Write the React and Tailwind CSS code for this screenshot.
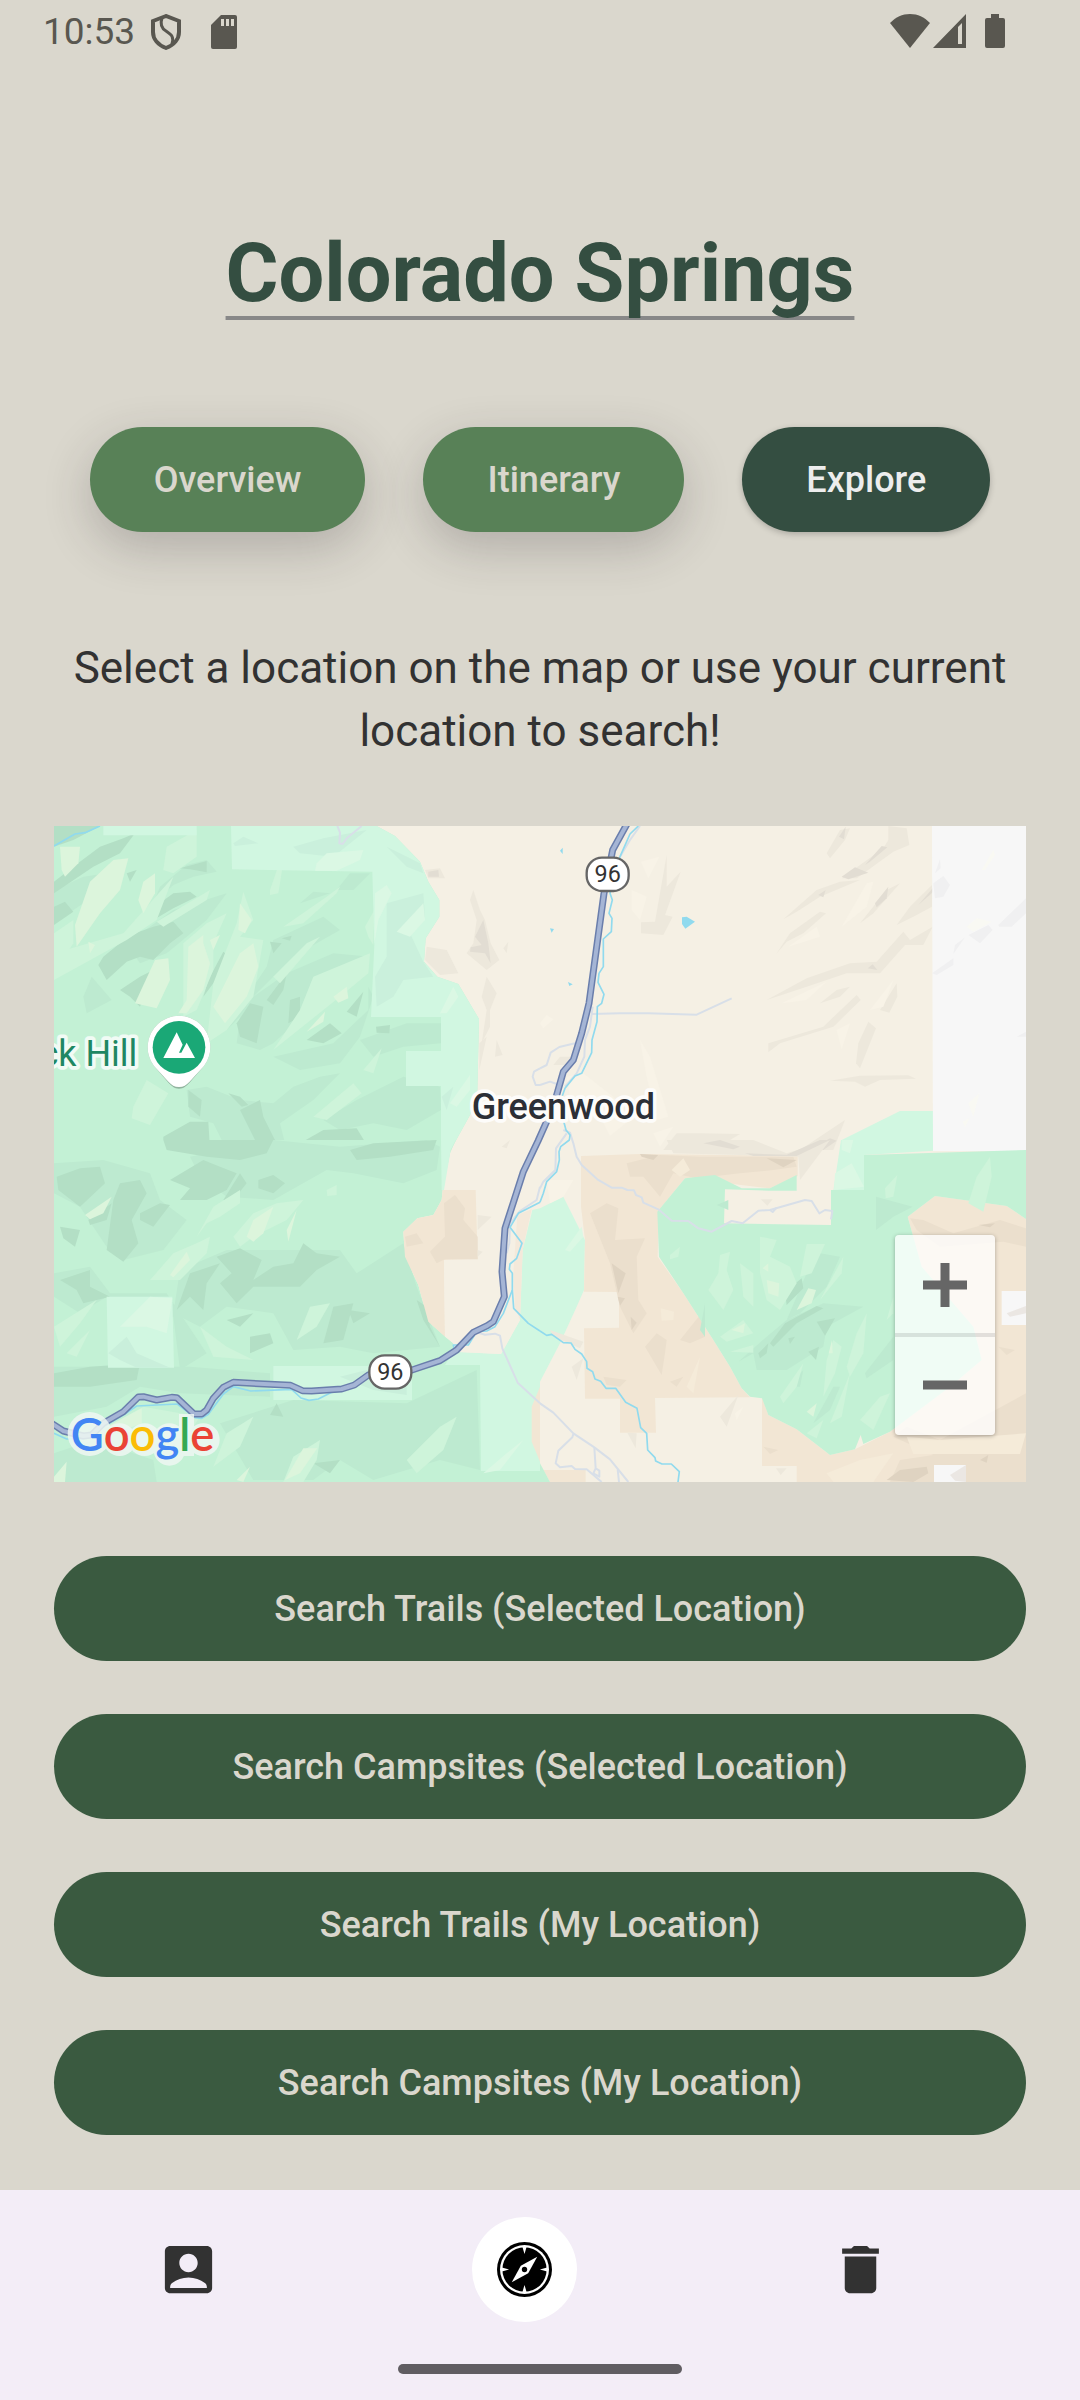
import { useState } from 'react';
import { MdDelete } from 'react-icons/md';

const TABS = ['Overview', 'Itinerary', 'Explore'];

const SEARCHES = [
  'Search Trails (Selected Location)',
  'Search Campsites (Selected Location)',
  'Search Trails (My Location)',
  'Search Campsites (My Location)',
];

// Terrain of the map, split in four tiles. Shapes are drawn in the order given.
const TILES = [
  {
    id: 'nw',
    transform: 'translate(-42 -48)',
    shapes: [
      ['#c3f1d5', ['42,48 1010,48 1065,78 1140,155 1165,215 1198,270 1198,320 1157,385 1152,455 1192,500 1255,522 1317,627 1312,840 1290,915 1232,1020 42,1020']],
      ['#bdead0', [
        '42,240 130,200 200,190 130,280 42,340',
        '360,230 440,165 500,150 530,185 460,200 400,225 340,280',
        '260,400 400,300 560,250 500,330 440,380 380,430 300,460',
        '700,390 850,320 900,360 830,400 760,440 640,560 600,620 560,660 620,560 680,470',
        '640,560 740,490 880,430 990,440 900,500 830,580 700,700 660,720 590,700 600,620',
        '700,740 880,700 985,600 985,530 1000,560 960,680 900,760 780,780',
        '440,840 500,830 600,870 700,880 760,830 840,800 900,790 820,870 720,940 740,1020 560,1020 520,940 450,920',
        '780,280 820,245 870,250 810,270',
        '130,560 155,500 215,570 140,610',
        '850,930 950,870 1090,800 1200,830 1203,900 1100,960 1000,940 900,960',
        '960,690 1100,640 1203,640 1203,700 1090,710 1000,740',
        '890,240 930,190 990,190 940,240',
      ]],
      ['#b3dfc5', [
        '42,48 180,48 100,90 42,110',
        '42,215 100,170 180,110 250,85 285,70 240,130 160,170 42,250',
        '42,290 75,275 100,305 42,345',
        '345,290 400,250 450,245 470,260 400,295 340,330',
        '420,175 500,153 500,187 450,178',
        '190,440 270,375 340,350 400,335 430,370 390,400 340,450 300,440 260,455 200,510 175,465',
        '240,540 300,500 340,480 300,590 270,560',
        '505,510 550,425 570,440 565,480 520,520 490,560',
        '690,395 725,400 700,430',
        '725,385 755,377 750,392',
        '590,640 630,580 670,590 650,700 600,680',
        '680,570 740,490 730,540 700,585',
        '750,570 780,560 780,620 745,640',
        '800,690 870,640 905,670 850,700',
        '1008,650 1050,645 1048,670 1010,668',
        '920,605 970,545 950,620',
        '370,980 450,935 505,935 510,1020 370,1020',
        '780,1000 850,960 950,955 990,1020 760,1020',
        '565,850 600,860 625,885 605,890',
        '445,840 485,870 480,920 445,890',
        '600,900 660,870 670,920 720,1020 650,1000',
        '260,190 290,180 270,215',
      ]],
      ['#cef4da', [
        '42,370 100,330 100,400 42,490',
        '380,110 470,60 470,140 400,190 370,180',
        '690,240 740,95 715,250 690,255',
        '820,500 990,430 985,490 900,560 700,720 720,690 780,600',
        '280,890 320,810 385,850 330,945 275,925',
        '820,920 940,820 965,850 860,930',
        '970,780 1025,715 1000,790',
        '42,430 250,370 400,200 350,330 260,390 42,510',
        '350,335 510,240 500,270 370,350',
        '590,340 610,245 640,330 600,380 670,390 640,560 560,660 500,700 520,520',
        '730,350 860,260 900,230 890,250 790,340',
        '700,500 800,400 840,380 720,520',
        '975,350 1003,300 1000,405 985,380',
        '430,400 500,340 560,310 520,400 520,480 470,600 430,620',
      ]],
      ['#dcf5dc', [
        '60,110 120,110 115,160 75,200 65,180',
        '150,215 220,150 265,145 240,240 180,310 110,410 105,345',
        '310,215 345,190 345,250 310,310 295,270',
        '345,450 385,445 390,510 350,595 285,580',
        '445,410 490,375 490,400 510,460 490,540 440,610 415,610 440,570',
        '600,430 640,400 655,470 620,560 555,640 520,590',
        '600,280 635,330 615,370 595,360',
        '880,560 920,530 925,565 895,578',
        '800,665 855,605 850,635',
        '145,395 165,405 150,430',
        '510,390 540,375 520,420',
      ]],
      ['#d1f7e1', [
        '573,48 1010,48 1065,78 1140,155 1165,215 1198,270 1198,320 1157,385 1152,455 1192,500 1255,522 1317,627 1312,840 1290,915 1232,1020 1203,1020 1203,828 1098,828 1098,723 1203,723 1203,621 993,621 1003,405 997,185 576,178',
        '190,48 470,48 470,76 190,76',
      ]],
      ['#caf0dc', [
        '1040,280 1150,250 1155,320 1110,370 1150,455 1180,500 1090,510 1060,560 1010,590 1005,500 1040,440 1040,340',
        '580,100 610,80 655,100 585,108',
        '1040,110 1140,160 1150,190 1100,170',
        '1205,860 1240,830 1220,900',
        '760,110 850,85 980,60 880,140 780,130',
      ]],
      ['#dbf8e4', [
        '1005,250 1040,225 1055,250 1015,330 1003,400',
        '1070,365 1150,280 1155,330 1110,380',
        '830,160 860,130 970,120 960,150 890,182 825,182',
        '1200,610 1240,530 1255,560 1220,610',
        '1230,880 1290,795 1290,840 1250,890',
      ]],
      ['#ede8dc', [
        '1155,180 1200,175 1215,205 1165,205',
        '1160,410 1220,420 1255,490 1200,495 1155,450',
        '1290,270 1300,240 1320,300 1335,330 1352,400 1378,450 1340,480 1280,430 1300,400 1310,330',
        '1318,700 1340,680 1318,780',
        '1340,500 1370,550 1350,600 1350,650 1325,700 1340,600 1325,560',
        '1365,740 1370,690 1388,735',
        '1390,415 1405,395 1400,430',
      ]],
      ['#e2ddd3', [
        '1165,185 1195,180 1197,200 1165,200',
        '1305,380 1330,330 1345,400 1352,460 1335,430 1290,425 1292,412 1325,405',
      ]],
    ],
  },
  {
    id: 'ne',
    transform: 'translate(1458 -48)',
    shapes: [
      ['#ede8dc', [
        '860,130 900,60 930,55 915,90 870,145',
        '1045,48 1100,55 1108,105 1060,125 950,205 905,205 1030,115 1045,90',
        '730,328 830,240 900,215 960,210 840,260 770,305',
        '303,337 345,335 380,135 380,230 422,185 375,315 398,320 370,375 303,370',
        '708,433 750,370 840,305 858,310 790,370 740,395',
        '680,570 800,505 930,460 1010,455 1090,365 1110,390 1178,350 1150,405 1095,405 1020,490 920,490 800,530',
        '1070,345 1110,290 1176,225 1176,290 1120,320',
        '685,700 850,650 950,555 962,570 880,650 720,700 685,727',
        '985,635 1008,655 960,775 948,760 955,700',
        '870,812 960,797 1105,796 1128,806 1020,810 975,830 945,815',
        '1020,600 1070,520 1072,560 1048,608',
        '960,340 1040,240 1080,220 1000,310',
        '840,580 890,540 930,530 900,560',
        '370,1020 410,970 480,970 600,972 520,1020',
        '780,1020 915,930 880,1020',
        '40,765 60,740 95,740 80,765',
      ]],
      ['#e2ddd3', [
        '905,200 945,172 985,188 925,208',
        '975,165 1025,108 1042,112 990,155',
        '835,255 857,240 850,262',
        '897,80 917,50 912,88',
        '1005,280 1045,230 1040,265 1010,292',
        '983,475 998,463 1012,480',
        '1135,285 1186,225 1186,240',
        '490,997 540,995 570,1012 495,1012',
        '805,1020 870,985 890,992 850,1020',
      ]],
      ['#f8f3e7', [
        '300,690 330,740 385,920 350,930 320,800',
        '303,155 358,140 325,205',
        '890,660 930,640 905,718',
        '275,240 320,260 300,330 275,300',
        '725,580 860,515 800,570',
        '80,800 130,790 220,860 270,930 210,978 170,900 90,860',
        '745,410 830,350 840,380',
        '905,350 980,220 1000,215 980,290',
        '990,600 1060,510 1030,590',
        '0,640 20,615 40,628 10,655',
        '340,970 400,950 360,1010',
      ]],
      ['#d1f7e1', ['905,990 1080,903 1179,903 1179,1020 900,1020']],
      ['#f7f7f7', ['1176,48 1458,48 1458,1023 1179,1023']],
      ['#f0f0f1', [
        '1180,220 1210,198 1230,225 1210,260 1185,265',
        '1176,490 1240,445 1240,465 1190,495',
        '1240,432 1245,405 1275,382',
        '1285,375 1345,345 1358,360 1320,400',
        '1375,345 1458,265 1458,310 1415,350 1378,350',
        '1185,190 1200,148 1202,175',
        '1430,680 1458,665 1458,680',
      ]],
      ['#f9f9f3', [
        '1325,180 1360,120 1365,135 1335,180',
        '1280,350 1310,325 1355,335 1300,365',
        '1285,880 1318,850 1300,920',
        '1268,935 1288,925 1275,952',
      ]],
      ['#90daee', [
        '426,322 440,320 465,335 436,356 426,342',
        '60,122 68,113 68,132',
        '30,355 42,357 35,368',
        '84,516 98,523 88,528',
      ]],
    ],
  },
  {
    id: 'sw',
    transform: 'translate(-42 942)',
    shapes: [
      ['#c3f1d5', ['42,0 1247,0 1230,40 1208,150 1205,180 1180,225 1132,235 1090,275 1095,350 1135,435 1165,545 1240,610 1240,635 1320,675 1500,960 1500,1026 42,1026']],
      ['#bdead0', [
        '42,70 190,60 330,100 360,180 440,240 370,330 250,360 200,320 120,200 42,160',
        '450,50 700,0 900,20 1160,0 1200,20 1190,90 1090,130 940,100 860,90 700,180 560,170 480,110',
        '420,390 560,330 740,330 900,330 950,400 1090,310 1130,440 1200,620 1000,640 900,620 760,630 700,520 560,500 480,560 400,520',
        '42,400 150,380 210,460 380,460 500,640 420,690 400,530 200,470 120,520 42,470',
        '42,680 450,680 690,700 690,770 420,760 300,740 200,800 42,830',
        '540,850 760,780 1100,790 1310,690 1320,990 1200,960 1000,1020 900,960 820,1020 640,1020',
        '42,940 160,900 340,960 350,1026 42,1026',
      ]],
      ['#b3dfc5', [
        '370,0 700,0 680,40 600,60 500,50 380,30',
        '390,120 490,60 540,80 590,100 560,150 500,180 420,180 450,145',
        '50,110 120,85 180,80 195,130 120,200 55,150',
        '240,130 300,120 320,160 275,240 295,310 250,365 200,330 220,180',
        '300,220 360,190 390,195 340,260 300,240',
        '60,260 120,270 105,320 70,295',
        '145,240 215,190 200,240 150,255',
        '530,350 600,325 665,360 640,420 700,380 760,370 790,310 830,340 900,350 830,390 780,440 640,440 590,490 540,430 575,400',
        '450,400 540,370 500,430 490,510 450,470 410,510',
        '60,420 150,390 150,440 210,470 130,490 110,450',
        '880,500 940,490 910,600 850,610',
        '925,510 990,520 940,550',
        '630,590 690,580 700,610 630,640',
        '560,540 640,520 600,560',
        '42,700 150,680 300,670 290,720 150,740 42,740',
        '930,30 1000,10 1190,0 1180,30 1050,50 950,60',
        '655,120 700,105 735,130 700,160 655,145',
        '205,640 260,590 220,650 290,700 250,690',
        '690,825 710,790 730,830',
        '820,970 900,960 870,1000',
        '1130,480 1160,500 1170,560 1200,620 1150,540',
        '550,180 600,100 620,130 580,180',
      ]],
      ['#cef4da', [
        '470,290 520,200 600,150 600,190 540,230 500,250',
        '580,290 640,220 710,190 790,180 740,240 640,290 600,320',
        '330,420 400,340 470,310 510,290 500,340 420,420',
        '770,600 810,500 870,490 830,560',
        '80,640 150,570 110,650',
        '42,560 170,480 120,550 60,620',
        '240,840 310,800 480,830 440,890 300,920',
        '560,880 640,830 600,920 520,980',
        '730,1026 760,950 840,900 830,960 790,1026',
        '1100,960 1200,860 1250,830 1210,930 1130,1000',
        '860,150 890,135 890,165 862,168',
        '480,560 560,620 640,660 520,650',
      ]],
      ['#dcf5dc', [
        '135,225 215,170 190,220 150,238',
        '620,290 640,240 700,200 670,280 640,305',
        '740,270 770,210 745,305',
        '390,405 440,335 450,360 400,412',
        '735,1020 790,925 832,925 780,1000',
        '200,860 305,805 305,850 250,870',
        '42,1010 80,965 75,1026 42,1026',
        '590,1020 630,980 610,1026',
      ]],
      ['#d1f7e1', [
        '200,470 397,470 402,683 204,683',
        '700,678 1116,678 1116,780 700,780',
        '1203,0 1247,0 1232,30 1212,150 1205,150',
        '1477,210 1500,205 1500,993 1323,993 1320,675 1215,675 1240,635 1383,642 1440,540 1448,330',
      ]],
      ['#f2e6d4', [
        '1208,150 1307,150 1313,358 1212,360 1215,590 1165,545 1135,435 1095,350 1090,275 1132,235 1180,225 1205,180',
        '1475,800 1500,740 1500,965 1475,905',
      ]],
      ['#f5f0e4', [
        '1212,360 1313,358 1316,150 1430,220 1440,540 1383,642 1240,635 1240,610 1215,590',
      ]],
      ['#f4e9da', ['1432,225 1475,208 1448,330 1440,540 1425,500 1420,400']],
      ['#ebdfcd', [
        '1212,190 1245,165 1275,205 1270,240 1313,290 1313,358 1215,358 1190,370 1170,335 1215,290',
        '1095,290 1130,280 1150,310 1100,320',
      ]],
      ['#ede8dc', ['1313,225 1355,230 1313,270', '1313,330 1328,335 1313,350', '1385,20 1410,0 1400,25']],
      ['#c9efdb', ['205,640 260,590 290,640 390,683 290,683 240,660', '900,710 980,690 1100,740 1100,765 1000,750']],
      ['#dbf8e4', ['240,560 330,470 397,475 380,580 320,560', '1330,1000 1400,940 1450,900 1380,990']],
    ],
  },
  {
    id: 'se',
    transform: 'translate(1458 942)',
    shapes: [
      ['#d1f7e1', [
        '0,205 70,170 135,300 132,450 110,500 60,610 0,725',
        '903,0 1179,0 1179,32 972,45 972,150 880,152',
      ]],
      ['#f2e6d4', [
        '123,48 300,42 773,48 773,108 690,145 435,115 357,210 353,350 430,460 520,600 570,680 605,745 630,772 345,774 348,878 240,878 240,776 135,776 132,565 237,563 237,456 132,455 135,300 123,200',
        '666,770 685,825 770,868 870,945 945,928 1050,875 1230,740 1325,660 1300,560 1145,380 1103,230 1185,168 1400,198 1458,237 1458,1026 770,1026 770,978 666,978',
        '10,990 137,990 137,1026 30,1026',
      ]],
      ['#ebdfcd', [
        '260,70 360,45 480,50 760,50 770,80 700,90 600,100 470,115 400,100 360,170 310,110 270,110',
        '150,220 200,190 235,205 225,300 315,295 290,350 295,480 320,520 280,580 240,500 210,370',
        '315,620 350,580 380,600 375,640 365,705',
        '420,600 480,525 495,590 450,610',
        '190,710 260,720 240,740 200,735',
        '390,725 430,710 410,740',
        '1150,240 1240,280 1380,240 1458,265 1458,320 1390,305 1200,320 1130,270 1110,235',
        '1060,890 1100,860 1200,900 1458,760 1458,1026 1050,1026 1080,960 1180,945',
        '670,920 715,930 690,942',
        '1375,620 1425,630 1400,645',
      ]],
      ['#dfd3c1', [
        '215,370 257,400 235,460',
        '272,530 290,548 275,570',
        '233,470 255,475 240,497',
        '300,42 355,45 340,60 305,50',
        '1040,1020 1080,990 1160,980 1165,1000 1120,1026',
        '1320,960 1345,945 1340,968',
        '1315,255 1365,250 1350,262',
        '680,55 770,60 730,82',
      ]],
      ['#f5ebd9', [
        '430,55 450,90 420,110 395,90',
        '860,1000 960,960 1060,940 1000,1026 880,1026',
        '440,740 480,650 460,760',
        '362,505 402,515 400,540 365,542',
        '1100,890 1200,900 1458,880 1440,942 1120,942',
      ]],
      ['#c3f1d5', [
        '972,45 1458,30 1458,237 1400,198 1185,168 1103,230 1145,380 1300,560 1325,660 1230,740 1050,875 970,912 962,885 945,928 870,945 770,868 685,825 666,775 630,770 605,745 570,680 520,600 430,460 357,350 352,215 435,115 525,105 605,145 690,145 770,105 770,152 687,152 555,148 552,250 873,255 873,150 972,150',
        '0,970 30,1026 0,1026',
      ]],
      ['#bdead0', [
        '595,665 680,590 740,540 850,490 970,500 860,560 850,620 740,690 650,690 640,640',
        '740,540 800,400 840,340 900,350 860,440 780,520',
        '1008,170 1118,200 1060,230 1008,270',
        '975,700 1060,590 1060,660 980,715',
        '820,850 880,740 900,740 870,810',
        '745,740 790,690 780,740',
        '530,195 565,180 565,210',
        '480,570 495,490 495,590',
      ]],
      ['#b3dfc5', [
        '735,455 785,415 790,445 740,495',
        '690,610 735,550 830,498 850,505 770,550 700,620',
        '830,545 885,535 855,587',
        '655,640 685,610 680,640 660,655',
        '805,635 837,620 828,660',
        '745,595 765,590 750,612',
      ]],
      ['#cef4da', [
        '535,400 540,345 570,335 560,390 580,450 550,510 505,450',
        '660,290 710,300 690,350 750,380 770,430 720,510 680,480 660,400',
        '800,312 855,312 815,400 780,410',
        '600,370 640,400 640,500 610,470',
        '860,660 880,600 905,620 885,700 850,770',
        '1310,110 1350,50 1355,110 1330,215 1285,190',
        '1035,145 1072,105 1060,170 1037,175',
        '720,770 790,670 770,740 730,790',
        '870,850 930,700 905,830',
        '920,680 950,580 980,520 970,640 930,710',
        '960,840 1020,770 1050,760 1000,870',
        '390,345 420,320 415,350 390,358',
        '800,880 850,840 830,895',
        '540,590 610,540 640,580 560,605',
        '570,635 640,615 640,638',
        '1040,540 1060,470 1060,520',
        '840,480 910,350 905,400',
      ]],
      ['#dcf5dc', [
        '680,420 718,430 715,470 685,460',
        '770,510 805,445 828,450 815,490',
        '800,815 830,790 820,830',
        '575,570 615,550 610,580',
        '668,385 685,370 685,395',
        '866,640 876,600 878,640',
      ]],
      ['#ede8dc', [
        '380,0 640,0 740,40 870,0 780,120 775,50 600,45 400,40',
        '30,570 130,605 120,625 40,590',
        '95,680 130,655 110,720',
        '540,830 595,765 560,860',
        '708,985 740,985 722,1005',
        '262,878 290,880 287,925',
        '662,178 698,178 682,197',
      ]],
      ['#e2ddd3', ['490,10 540,0 600,20 580,28', '615,40 740,44 840,0 870,0 770,48 640,48']],
      ['#f8f3e7', ['20,120 100,120 70,170 30,190', '585,820 610,800 590,840']],
      ['#dbf8e4', ['75,330 125,260 130,290 90,335', '905,0 940,0 930,40 905,30', '885,100 935,70 972,140 882,150']],
      ['#f7f7f7', [
        '1180,-3 1458,-3 1458,30 1335,30 1335,33 1180,33',
        '1385,453 1458,453 1458,555 1385,555',
        '1182,975 1278,975 1278,1026 1182,1026',
      ]],
      ['#ebe7e3', ['1230,1005 1278,975 1278,1026 1245,1022', '1400,520 1458,498 1458,520 1410,530']],
    ],
  },
];

const MINOR_ROADS = [
  ['nw', '892,48 900,68 898,100 908,102 920,85 965,48'],
  ['nw', '1500,775 1482,785 1478,800 1487,825 1500,825'],
  ['ne', '300,48 270,90 240,140'],
  ['ne', '155,612 240,610 325,610 470,614 575,565'],
  ['ne', '158,590 150,650 135,690 133,740 110,790 75,830'],
  ['ne', '0,775 20,765 32,728 58,711 105,700'],
  ['ne', '0,825 30,815 50,822'],
  ['ne', '70,960 90,968 100,1000 110,1040 125,1065 172,1108 215,1133 245,1133 262,1140 282,1141 288,1155 305,1162 310,1178 355,1198 395,1232 445,1233 475,1255 515,1265 575,1233 608,1240 655,1202 690,1200 795,1170 815,1173 838,1210 855,1200 877,1203 873,1228'],
  ['se', '690,210 698,216 710,203'],
  ['se', '80,-20 48,25 46,90 10,125 0,145'],
  ['se', '0,790 40,818 100,880 163,922 210,958 265,1026'],
  ['se', '100,882 97,892 55,932 47,970 60,982 95,978 105,987 140,988 185,1026'],
  ['se', '163,922 167,985 178,992 178,1010 160,1000 167,985'],
  ['se', '233,988 237,1026'],
  ['sw', '1310,577 1335,584 1365,581 1380,587 1387,625 1433,728 1500,790'],
  ['sw', '1500,140 1490,180 1440,213 1410,250 1408,310 1400,340'],
];

const RIVERS = [
  ['nw', '42,108 105,72 135,68 180,48'],
  ['ne', '295,48 270,72 240,140 210,250 217,270 207,310 216,325 214,365 190,387 190,470 177,490 174,517 192,553 185,580 172,590 171,635 156,690 155,728 125,790 105,798 75,835 66,860 70,930 78,960 90,975 88,990 62,1010 57,1025 58,1050 50,1085 20,1115 10,1150 0,1177'],
  ['sw', '1500,187 1435,220 1410,262 1446,310 1430,355 1410,372 1408,388 1417,400 1417,450 1390,520 1365,560 1340,573 1310,575 1285,615 1240,615 1245,640 1200,668'],
  ['sw', '1417,450 1421,505 1465,550 1500,573'],
  ['sw', '910,750 875,757 835,777 807,781 783,774 755,748 632,753 580,740 550,762 505,823 485,835 465,833 412,792 290,798 250,825 190,860 130,897 80,897 42,880'],
  ['se', '0,573 20,586 35,583 70,608 93,609 105,628 125,642 140,665 141,685 158,695 165,717 182,724 198,745 227,745 257,787 291,805 302,863 320,880 323,930 345,953 347,963 366,972 394,972 418,995 414,1026'],
];

const HIGHWAY =
  '1720,-8 1676,72 1650,202 1605,532 1583,622 1558,702 1528,737 1498,842 1452,945 1408,1037 1353,1207 1344,1337 1351,1412 1318,1487 1300,1499 1258,1519 1208,1572 1158,1604 1074,1632 990,1640 943,1647 901,1677 863,1689 773,1695 745,1694 710,1678 538,1669 508,1684 478,1717 458,1752 443,1764 420,1764 368,1715 353,1714 308,1722 268,1712 253,1713 208,1757 148,1792 113,1827 88,1830 28,1815 -10,1790';

const tileTransform = (id) => TILES.find((tile) => tile.id === id).transform;

const StatusBar = () => (
  <header className="flex h-[63px] items-start justify-between pt-[14px] pr-[75px] pl-[43px] text-[#595750]">
    <div className="flex items-center">
      <span className="text-[37px] leading-9">10:53</span>
      <svg viewBox="0 0 30 36" className="ml-4 h-9 w-[30px]" fill="none" stroke="currentColor" strokeWidth="4">
        <path d="M15 2 2 7v11c0 7 5 13 13 16 8-3 13-9 13-16V7z" />
        <path d="M11 4c-2 6-1 10 4 13 6 4 8 6 6 13" strokeWidth="3" />
      </svg>
      <svg viewBox="0 0 26 34" className="ml-[30px] h-[34px] w-[26px]">
        <path fill="currentColor" d="M10 0h14a2 2 0 0 1 2 2v30a2 2 0 0 1-2 2H2a2 2 0 0 1-2-2V10z" />
        <path fill="#dad7cd" d="M10 4h3v7h-3zM15 4h3v7h-3zM20 4h3v7h-3z" />
      </svg>
    </div>
    <div className="flex items-start" aria-hidden="true">
      <svg viewBox="0 0 40 34" className="h-[34px] w-10" fill="currentColor">
        <path d="M20 34 0 9C6 3 12 0 20 0s14 3 20 9z" />
      </svg>
      <svg viewBox="0 0 33 34" className="ml-[3px] h-[34px] w-[33px]" fill="currentColor">
        <path fillRule="evenodd" d="M33 0v34H0zM25 13v17h4V9z" />
      </svg>
      <svg viewBox="0 0 20 34" className="ml-[19px] h-[34px] w-5" fill="currentColor">
        <path d="M6 0h8v4h4a2 2 0 0 1 2 2v26a2 2 0 0 1-2 2H2a2 2 0 0 1-2-2V6a2 2 0 0 1 2-2h4z" />
      </svg>
    </div>
  </header>
);

const RouteShield = ({ x, y }) => (
  <g>
    <rect x={x - 63} y={y - 50} width="126" height="100" rx="46" fill="#fff" stroke="#666" strokeWidth="7" />
    <text x={x} y={y + 24} textAnchor="middle" fontSize="70" fill="#333">96</text>
  </g>
);

const TerrainMap = () => (
  <svg
    viewBox="0 0 2916 1968"
    preserveAspectRatio="xMidYMid slice"
    className="block aspect-[972/656] w-full bg-[#f5f0e4]"
    role="img"
    aria-label="Map of Greenwood"
  >
    {TILES.map((tile) => (
      <g key={tile.id} transform={tile.transform}>
        {tile.shapes.map(([fill, polygons]) =>
          polygons.map((points) => <polygon key={fill + points} points={points} fill={fill} />)
        )}
      </g>
    ))}

    <g fill="none" stroke="#d8dfe8" strokeWidth="6" strokeLinejoin="round">
      {MINOR_ROADS.map(([tile, points]) => (
        <polyline key={points} points={points} transform={tileTransform(tile)} />
      ))}
    </g>
    <g fill="none" stroke="#90daee" strokeWidth="5" strokeLinejoin="round">
      {RIVERS.map(([tile, points]) => (
        <polyline key={points} points={points} transform={tileTransform(tile)} />
      ))}
    </g>
    <polyline points={HIGHWAY} fill="none" stroke="#6a7eac" strokeWidth="21" strokeLinejoin="round" />
    <polyline points={HIGHWAY} fill="none" stroke="#a5b5d5" strokeWidth="12" strokeLinejoin="round" />

    <RouteShield x={1661} y={145} />
    <RouteShield x={1009} y={1638} />

    {/* park pin */}
    <g transform="translate(375 664)">
      <path d="M0 124c-14 0-22-8-31-17l-44-51a94 94 0 1 1 150 0l-44 51c-9 9-17 17-31 17z" fill="#000" opacity="0.25" />
      <path d="M0 119c-14 0-22-6-31-15l-44-48a94 94 0 1 1 150 0l-44 48c-9 9-17 15-31 15z" fill="#fff" />
      <circle r="79" fill="#1aa876" />
      <path d="M-47 32-7-45l18 37L0 16h7L23-14l25 46z" fill="#fff" />
    </g>

    <g strokeLinejoin="round">
      <text x="250" y="720" textAnchor="end" fontSize="108" fill="#1f8763" stroke="#f1fbf5" strokeWidth="22" className="[paint-order:stroke]">
        ck Hill
      </text>
      <text x="1528" y="879" textAnchor="middle" fontSize="108" fontWeight="500" fill="#2c2f36" stroke="#fdfcfa" strokeWidth="22" className="[paint-order:stroke]">
        Greenwood
      </text>
    </g>

    {/* pale halo under the wordmark */}
    <g fill="#eff8f3" opacity="0.85">
      <circle cx="107" cy="1824" r="66" />
      <circle cx="197" cy="1841" r="49" />
      <circle cx="272" cy="1841" r="49" />
      <circle cx="346" cy="1841" r="49" />
      <circle cx="346" cy="1872" r="47" />
      <rect x="375" y="1764" width="45" height="126" />
      <circle cx="448" cy="1841" r="49" />
    </g>
    <text x="50" y="1876" fontSize="136" fontWeight="600" className="font-['Lato',sans-serif]">
      <tspan fill="#4285f4">G</tspan>
      <tspan fill="#ea4335">o</tspan>
      <tspan fill="#fbbc05">o</tspan>
      <tspan fill="#4285f4">g</tspan>
      <tspan fill="#34a853">l</tspan>
      <tspan fill="#ea4335">e</tspan>
    </text>
  </svg>
);

const ZoomControls = () => (
  <div className="absolute right-[31px] bottom-[47px] flex w-[100px] flex-col rounded bg-white/75 shadow-[0_1px_4px_rgba(0,0,0,0.3)]">
    <button type="button" aria-label="Zoom in" className="flex h-[100px] items-center justify-center">
      <svg viewBox="0 0 44 44" className="size-11" fill="#666">
        <path d="M17.5 0h9v17.5H44v9H26.5V44h-9V26.5H0v-9h17.5z" />
      </svg>
    </button>
    <div className="-my-0.5 h-1 bg-black/10" />
    <button type="button" aria-label="Zoom out" className="flex h-[100px] items-center justify-center">
      <svg viewBox="0 0 44 44" className="size-11" fill="#666">
        <path d="M0 17.5h44v9H0z" />
      </svg>
    </button>
  </div>
);

const BottomNav = () => (
  <nav className="bg-[#f3edf7] pt-[27px] pb-[26px]">
    <div className="grid grid-cols-3 items-center justify-items-center pr-[52px] pl-5">
      <a href="#profile" aria-label="Profile" className="text-[#323232]">
        <svg viewBox="0 0 24 24" className="size-[63px]" fill="currentColor">
          <path d="M19 3H5c-1.11 0-2 .9-2 2v14c0 1.1.89 2 2 2h14c1.1 0 2-.9 2-2V5c0-1.1-.89-2-2-2zm-7 3c1.93 0 3.5 1.57 3.5 3.5S13.93 13 12 13s-3.5-1.57-3.5-3.5S10.07 6 12 6zm7 13H5v-.23c0-.62.28-1.2.76-1.58C7.47 15.82 9.64 15 12 15s4.53.82 6.24 2.19c.48.38.76.97.76 1.58V19z" />
        </svg>
      </a>
      <a href="#explore" aria-label="Explore trips" className="flex size-[105px] items-center justify-center rounded-full bg-white">
        <svg viewBox="-82 -82 164 164" className="size-[55px]">
          <circle r="82" />
          <circle r="73" fill="#fff" />
          <circle r="66" />
          <g fill="#fff">
            <path d="M-7-70H7L0-46zM-7 70H7L0 46zM-70-7V7l24-7zM70-7V7L46 0z" />
            <path d="M38-38 11 11-38 38-11-11z" />
          </g>
          <circle r="8" />
        </svg>
      </a>
      <button type="button" aria-label="Delete" className="text-[#323232]">
        <MdDelete className="size-[63px]" />
      </button>
    </div>
    <div className="mx-auto mt-[42px] h-[10px] w-[284px] rounded-full bg-[#605d62]" />
  </nav>
);

const App = () => {
  const [activeTab, setActiveTab] = useState('Explore');

  return (
    <div className="flex min-h-screen flex-col bg-[#dad7cd] font-['Roboto',sans-serif]">
      <StatusBar />

      <main className="flex-1 px-[54px] pt-[163px] pb-[55px]">
        <h1 className="text-center text-[81px] leading-[96px] font-bold text-[#344e41] underline decoration-[#888] decoration-4 underline-offset-[15px] [text-decoration-skip-ink:none]">
          Colorado Springs
        </h1>

        <div className="mt-[105px] flex justify-center gap-[58px]">
          {TABS.map((tab) => (
            <button
              key={tab}
              type="button"
              onClick={() => setActiveTab(tab)}
              className={`h-[105px] rounded-full px-16 text-[36px] font-medium ${
                tab === activeTab
                  ? 'bg-[#344e41] text-[#ededed] shadow-[0_2px_6px_rgba(0,0,0,0.22)]'
                  : 'bg-[#588157] text-[#dad7cd] shadow-[0_16px_48px_rgba(50,40,50,0.24)]'
              }`}
            >
              {tab}
            </button>
          ))}
        </div>

        <p className="mt-[105px] text-center text-[44px] leading-[63px] text-[#323232]">
          Select a location on the map or use your current location to search!
        </p>

        <div className="relative mt-[63px]">
          <TerrainMap />
          <ZoomControls />
        </div>

        <div className="mt-[74px] flex flex-col gap-[53px]">
          {SEARCHES.map((label) => (
            <button
              key={label}
              type="button"
              className="h-[105px] rounded-full bg-[#3a5a40] text-[36px] font-medium text-[#dad7cd]"
            >
              {label}
            </button>
          ))}
        </div>
      </main>

      <BottomNav />
    </div>
  );
};

export default App;
